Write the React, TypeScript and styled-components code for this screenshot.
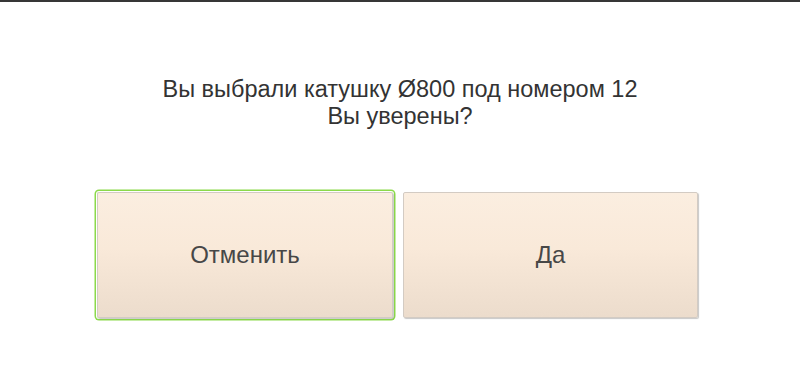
import React from 'react'
import styled, { createGlobalStyle } from 'styled-components'

const GlobalStyle = createGlobalStyle`
  html, body {
    margin: 0;
    padding: 0;
    background: #ffffff;
  }
  body {
    font-family: 'Liberation Sans', Arial, sans-serif;
  }
`

const Screen = styled.div`
  width: 800px;
  height: 376px;
  box-sizing: border-box;
  border-top: 2px solid #363636;
  display: flex;
  flex-direction: column;
  align-items: flex-start;
`

const Message = styled.div`
  align-self: stretch;
  margin-top: 74px;
  text-align: center;
  font-size: 23.5px;
  line-height: 27px;
  color: #333333;
`

const ButtonRow = styled.div`
  display: flex;
  gap: 10px;
  margin-top: 62px;
  margin-left: 97px;
`

const DialogButton = styled.button<{ focused?: boolean }>`
  width: ${(p) => (p.focused ? 296 : 295)}px;
  height: 126px;
  box-sizing: border-box;
  border: 1px solid #d3cbc3;
  border-radius: 2px;
  background: linear-gradient(to bottom, #fbeee0 0%, #f9e9d9 45%, #ecdccc 100%);
  box-shadow: ${(p) =>
    p.focused
      ? '1px 1px 1px rgba(0,0,0,0.22), 0 0 0 1px #ffffff, 0 0 0 2.5px #8cd94a'
      : '1px 1px 1px rgba(0,0,0,0.22)'};
  font-family: 'Liberation Sans', Arial, sans-serif;
  font-size: 24px;
  color: #474747;
  padding: 0;
  cursor: pointer;
  outline: none;
`

export default function App() {
  return (
    <>
      <GlobalStyle />
      <Screen>
        <Message>
          Вы выбрали катушку Ø800 под номером 12
          <br />
          Вы уверены?
        </Message>
        <ButtonRow>
          <DialogButton focused>Отменить</DialogButton>
          <DialogButton>Да</DialogButton>
        </ButtonRow>
      </Screen>
    </>
  )
}
